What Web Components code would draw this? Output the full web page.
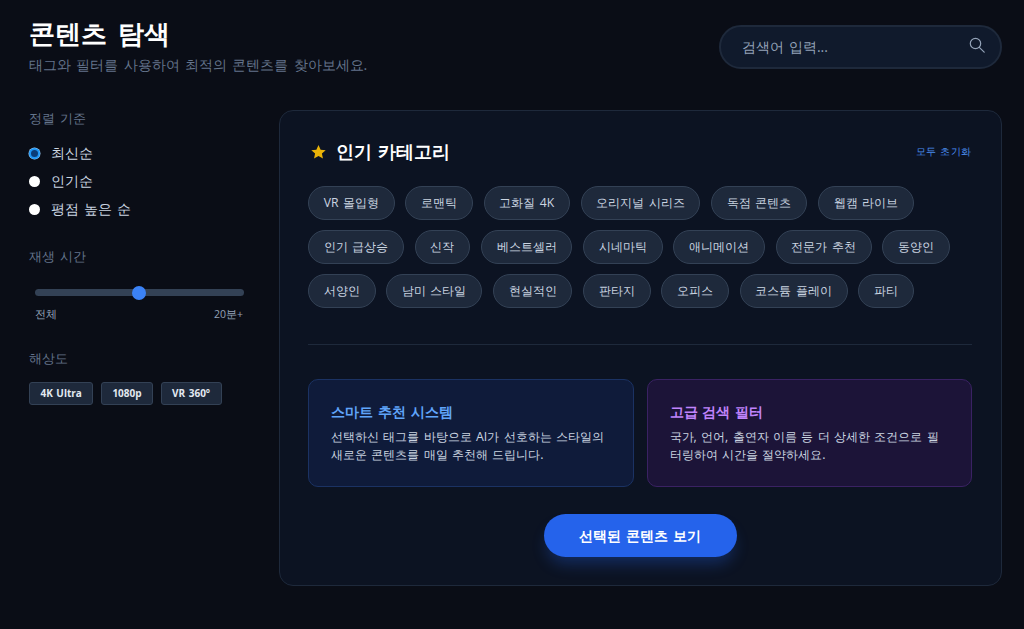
<!DOCTYPE html>
<html>
<head>
<meta charset="utf-8">
<title>콘텐츠 탐색</title>
<style>
  html, body { margin: 0; height: 100%; }
  body {
    background: #0a0d16;
    color: #fff;
    font-family: "Open Sans", sans-serif;
    overflow: hidden;
  }
</style>
</head>
<body>
<explore-page>
  <page-header slot="header" heading="콘텐츠 탐색" sub="태그와 필터를 사용하여 최적의 콘텐츠를 찾아보세요."></page-header>
  <filter-sidebar slot="side"></filter-sidebar>
  <category-panel slot="main"></category-panel>
</explore-page>

<script>
// the hangul fallback has a narrow space, so every element widens it a little
const BASE = `<style>:host, * { word-spacing: .09em; }</style>`;

const define = (name, markup) => {
  customElements.define(name, class extends HTMLElement {
    connectedCallback() {
      if (this.shadowRoot) return;
      this.attachShadow({ mode: "open" }).innerHTML = BASE + (typeof markup === "function" ? markup(this) : markup);
    }
  });
};

define("explore-page", `
  <style>
    :host { display: block; padding: 17px 22px 0 29px; }
    .body { display: flex; margin-top: 41px; }
    .side { flex: 0 0 250px; }
    .main { flex: 1; min-width: 0; }
  </style>
  <slot name="header"></slot>
  <div class="body">
    <div class="side"><slot name="side"></slot></div>
    <div class="main"><slot name="main"></slot></div>
  </div>
`);

define("page-header", (el) => `
  <style>
    :host { display: flex; justify-content: space-between; align-items: flex-start; height: 52px; }
    h1 { margin: -2px 0 0; font-size: 26.3px; line-height: 36px; font-weight: 700; color: #fff; word-spacing: .17em; }
    p { margin: 4px 0 0; font-size: 14px; line-height: 20px; color: #64748b; word-spacing: .12em; }
    search-box { margin-top: 8px; }
  </style>
  <div>
    <h1>${el.getAttribute("heading")}</h1>
    <p>${el.getAttribute("sub")}</p>
  </div>
  <search-box></search-box>
`);

define("search-box", `
  <style>
    :host {
      display: flex; align-items: center; justify-content: space-between; box-sizing: border-box;
      width: 283px; height: 44px; padding: 0 15px 0 21px;
      background: #101a2c; border: 2px solid #1e293b; border-radius: 22px;
      font-size: 14px; color: #94a3b8;
    }
    svg { display: block; margin-bottom: 4px; }
  </style>
  <span>검색어 입력...</span>
  <svg width="16" height="16" viewBox="0 0 16 16" fill="none" stroke="#94a3b8" stroke-width="1.2" stroke-linecap="round">
    <circle cx="6.5" cy="6.5" r="5.2"/><path d="M10.3 10.3l4.9 4.9"/>
  </svg>
`);

define("filter-sidebar", `
  <style>
    :host { display: block; }
    h3 { margin: 0; font-size: 13px; line-height: 16px; font-weight: 500; color: #64748b; }
    .radios { display: flex; flex-direction: column; gap: 8px; margin-top: 17px; margin-bottom: 29px; }
    .res { display: flex; gap: 7.5px; margin-top: 16px; }
    range-bar { margin: 25px 0 28px; }
  </style>
  <h3>정렬 기준</h3>
  <div class="radios">
    <radio-row checked>최신순</radio-row>
    <radio-row>인기순</radio-row>
    <radio-row>평점 높은 순</radio-row>
  </div>
  <h3>재생 시간</h3>
  <range-bar></range-bar>
  <h3>해상도</h3>
  <div class="res">
    <res-chip>4K Ultra</res-chip>
    <res-chip>1080p</res-chip>
    <res-chip>VR 360°</res-chip>
  </div>
`);

define("radio-row", (el) => `
  <style>
    :host { display: flex; align-items: center; gap: 11px; height: 20px; font-size: 14px; color: #cbd5e1; }
    i {
      display: block; box-sizing: border-box; width: 11px; height: 11px; border-radius: 50%; background: #fff;
      ${el.hasAttribute("checked") ? "border: 2.5px solid #1e96f5; background: #0a3c78; box-shadow: 0 0 0 .5px #9ccdf8;" : ""}
    }
  </style>
  <i></i><span><slot></slot></span>
`);

define("range-bar", `
  <style>
    :host { display: block; padding: 0 7px 0 6px; width: 209px; }
    .track { position: relative; height: 7px; border-radius: 4px; background: #334155; }
    .thumb { position: absolute; left: 97px; top: -3.5px; width: 14px; height: 14px; border-radius: 50%; background: #3b82f6; }
    .ends { display: flex; justify-content: space-between; margin-top: 10px; font-size: 10.5px; line-height: 16px; color: #94a3b8; }
    .ends span:last-child { margin-right: 1px; }
  </style>
  <div class="track"><div class="thumb"></div></div>
  <div class="ends"><span>전체</span><span>20분+</span></div>
`);

define("res-chip", `
  <style>
    :host {
      display: block; box-sizing: border-box; height: 23px; padding: 0 10.5px; line-height: 21px;
      background: #1e293b; border: 1px solid #334155; border-radius: 3px;
      font-size: 10px; font-weight: 700; color: #e2e8f0;
    }
  </style>
  <slot></slot>
`);

const TAGS = [
  "VR 몰입형", "로맨틱", "고화질 4K", "오리지널 시리즈", "독점 콘텐츠", "웹캠 라이브",
  "인기 급상승", "신작", "베스트셀러", "시네마틱", "애니메이션", "전문가 추천", "동양인",
  "서양인", "남미 스타일", "현실적인", "판타지", "오피스", "코스튬 플레이", "파티",
];

define("category-panel", `
  <style>
    :host {
      display: block; box-sizing: border-box; height: 476px; padding: 29px 29px 0 28px;
      background: #0c1322; border: 1px solid #1e293b; border-radius: 14px;
    }
    .top { display: flex; justify-content: space-between; align-items: center; height: 24px; }
    h2 { display: flex; align-items: center; gap: 9px; margin: 0; font-size: 17.5px; line-height: 24px; font-weight: 700; color: #fff; }
    h2 span { margin-bottom: 2px; }
    svg { margin-left: 2px; }
    .reset { margin-bottom: 2px; font-size: 10px; letter-spacing: .5px; font-weight: 500; color: #4b8ef0; }
    .tags { display: flex; flex-wrap: wrap; gap: 10.5px 10.7px; margin-top: 22px; }
    hr { border: 0; border-top: 1px solid #1e293b; margin: 36px 0 34px; }
    .cards { display: grid; grid-template-columns: 1fr 1fr; gap: 13px; }
    .cta { display: flex; justify-content: center; margin-top: 27.5px; }
    button {
      width: 193px; height: 43px; border: 0; border-radius: 22px;
      background: #2563eb; color: #fff; font: 700 14px "Open Sans", sans-serif;
      box-shadow: 0 10px 15px -3px rgba(37, 99, 235, .3);
    }
  </style>
  <div class="top">
    <h2>
      <svg width="17" height="16" viewBox="0 0 24 24" fill="#eab308"><path d="M12 1.5l3.2 7 7.6.8-5.7 5.1 1.6 7.5L12 18.1l-6.7 3.8 1.6-7.5L1.2 9.3l7.6-.8z"/></svg>
      <span>인기 카테고리</span>
    </h2>
    <span class="reset">모두 초기화</span>
  </div>
  <div class="tags">${TAGS.map((t) => `<tag-pill>${t}</tag-pill>`).join("")}</div>
  <hr>
  <div class="cards">
    <info-card heading="스마트 추천 시스템" tone="blue">선택하신 태그를 바탕으로 AI가 선호하는 스타일의 새로운 콘텐츠를 매일 추천해 드립니다.</info-card>
    <info-card heading="고급 검색 필터" tone="purple">국가, 언어, 출연자 이름 등 더 상세한 조건으로 필터링하여 시간을 절약하세요.</info-card>
  </div>
  <div class="cta"><button>선택된 콘텐츠 보기</button></div>
`);

define("tag-pill", `
  <style>
    :host {
      display: block; box-sizing: border-box; height: 33.5px; padding: 0 14.8px; line-height: 31.5px;
      background: #1e293b; border: 1px solid #334155; border-radius: 17px;
      font-size: 12.2px; color: #cbd5e1; white-space: nowrap;
    }
  </style>
  <slot></slot>
`);

const TONES = {
  blue: { bg: "#0f1b3a", line: "#1b3263", head: "#60a5fa" },
  purple: { bg: "#1c1438", line: "#3a2263", head: "#c084fc" },
};

define("info-card", (el) => {
  const t = TONES[el.getAttribute("tone")];
  return `
  <style>
    :host {
      display: block; box-sizing: border-box; height: 108px; padding: 22px 22px 0;
      background: ${t.bg}; border: 1px solid ${t.line}; border-radius: 10px;
    }
    h4 { margin: 0 0 6px; font-size: 14px; line-height: 20px; font-weight: 700; color: ${t.head}; }
    p { margin: 0; font-size: 12.4px; line-height: 18px; color: #cbd5e1; word-spacing: .18em; }
  </style>
  <h4>${el.getAttribute("heading")}</h4>
  <p><slot></slot></p>`;
});
</script>
</body>
</html>
